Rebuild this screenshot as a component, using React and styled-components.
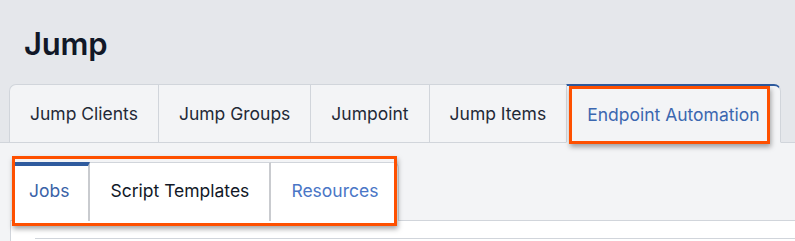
import styled, { createGlobalStyle } from "styled-components";

const GlobalStyle = createGlobalStyle`
  html, body {
    margin: 0;
    padding: 0;
    background: #e5e7eb;
    font-family: "Inter", "Noto Sans", sans-serif;
    overflow: hidden;
  }
`;

const mainTabs = ["Jump Clients", "Jump Groups", "Jumpoint", "Jump Items", "Endpoint Automation"];
const subTabs = [
  { label: "Jobs", active: true },
  { label: "Script Templates" },
  { label: "Resources", link: true },
];

export default function App() {
  return (
    <Page>
      <GlobalStyle />
      <Header>
        <Title>Jump</Title>
      </Header>

      <TabBar>
        {mainTabs.map((t, i) => (
          <MainTab key={t} $active={i === mainTabs.length - 1} $first={i === 0}>
            {t}
          </MainTab>
        ))}
      </TabBar>

      <Content>
        <SubTabBar>
          {subTabs.map((t, i) => (
            <SubTab key={t.label} $active={t.active} $link={t.link} $last={i === subTabs.length - 1}>
              {t.label}
            </SubTab>
          ))}
        </SubTabBar>
        <Panel>
          <PanelRule />
        </Panel>
      </Content>

      <Highlight style={{ left: 569, top: 86, width: 201, height: 58 }} />
      <Highlight style={{ left: 12, top: 156, width: 385, height: 70 }} />
    </Page>
  );
}

const Page = styled.div`
  position: relative;
  width: 795px;
  height: 241px;
  overflow: hidden;
`;

const Header = styled.div`
  height: 84px;
  box-sizing: border-box;
  padding: 24px 0 0 24px;
`;

const Title = styled.h1`
  margin: 0;
  font-size: 31px;
  font-weight: 600;
  line-height: 40px;
  color: #111827;
  letter-spacing: -0.2px;
`;

const TabBar = styled.div`
  display: flex;
  margin-left: 9px;
  height: 58px;
`;

const MainTab = styled.div`
  display: flex;
  align-items: center;
  padding: 0 20px;
  font-size: 17.5px;
  color: ${(p) => (p.$active ? "#3b67b0" : "#1f2937")};
  background: #f3f4f6;
  border-top: ${(p) => (p.$active ? "2px solid #2f5b9e" : "1px solid #d1d5db")};
  border-left: 1px solid #d1d5db;
  border-right: ${(p) => (p.$active ? "1px solid #d1d5db" : "none")};
  border-bottom: ${(p) => (p.$active ? "1px solid #f3f4f6" : "1px solid #d1d5db")};
  border-top-left-radius: ${(p) => (p.$first ? "7px" : "0")};
  border-top-right-radius: ${(p) => (p.$active ? "7px" : "0")};
  margin-bottom: -1px;
  position: relative;
  z-index: ${(p) => (p.$active ? 1 : 0)};
`;

const Content = styled.div`
  border-top: 1px solid #d1d5db;
  background: #f3f4f6;
  padding: 19px 0 0 10px;
  height: 200px;
`;

const SubTabBar = styled.div`
  display: flex;
  height: 58px;
  margin-left: 4px;
`;

const SubTab = styled.div`
  display: flex;
  align-items: center;
  box-sizing: border-box;
  background: #ffffff;
  padding: ${(p) => (p.$active ? "0 19px 6px 15px" : "0 20px 3px")};
  font-size: 17.5px;
  color: ${(p) => (p.$active ? "#3a62a7" : p.$link ? "#4a76c6" : "#111827")};
  border-top: ${(p) => (p.$active ? "4px solid #2f5b9e" : "1px solid #d1d5db")};
  border-right: ${(p) => (p.$last ? "1px solid #d1d5db" : "2px solid #c9cbcf")};
  border-top-right-radius: ${(p) => (p.$last ? "6px" : "0")};
  position: relative;
  z-index: 1;
  margin-bottom: -1px;
`;

const Panel = styled.div`
  background: #ffffff;
  border-top: 1px solid #d1d5db;
  border-left: 1px solid #d1d5db;
  height: 80px;
  padding: 17px 0 0 24px;
  box-sizing: border-box;
`;

const PanelRule = styled.div`
  border-top: 1px solid #d1d5db;
`;

const Highlight = styled.div`
  position: absolute;
  box-sizing: border-box;
  border: 3px solid #fe5000;
  box-shadow: 1px 3px 5px rgba(0, 0, 0, 0.35);
  z-index: 5;
  pointer-events: none;
`;
